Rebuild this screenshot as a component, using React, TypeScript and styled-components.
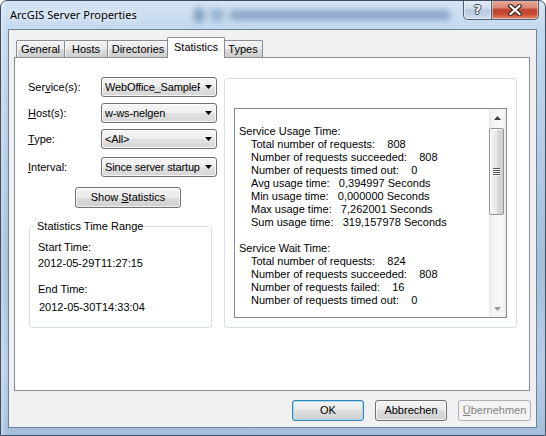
import React from "react";
import styled, { createGlobalStyle } from "styled-components";

const Global = createGlobalStyle`
  html, body {
    margin: 0;
    padding: 0;
    width: 546px;
    height: 436px;
    overflow: hidden;
    background: #fff;
  }
  body {
    font-family: "Liberation Sans", Arial, sans-serif;
    font-size: 11px;
    color: #000;
  }
`;

/* ---------- window frame ---------- */

const Window = styled.div`
  position: relative;
  box-sizing: border-box;
  width: 546px;
  height: 436px;
  display: flex;
  flex-direction: column;
  padding: 0 8px 7px 7px;
  border: 1px solid #3f4d60;
  border-radius: 7px 7px 0 0;
  overflow: hidden;
  background:
    linear-gradient(90deg, rgba(255, 255, 255, 0.35) 0, rgba(255, 255, 255, 0) 6px),
    linear-gradient(180deg, #d4e4f4 0%, #c2d8ee 7%, #b3cbe5 35%, #a4bfdc 60%, #b6cde7 85%, #a5bfdc 100%);
`;

const TitleBar = styled.div`
  position: relative;
  height: 28px;
  display: flex;
  align-items: flex-start;
  justify-content: space-between;
  padding-left: 1px;
`;

/* the blurred desktop content showing through the glass */
const GlassHaze = styled.div`
  position: absolute;
  left: 172px;
  top: 2px;
  width: 270px;
  height: 24px;
  filter: blur(3px);
  opacity: 0.45;
  pointer-events: none;
`;

const HazeBlob = styled.div<{ $x: number; $w: number; $c: string; $y?: number; $h?: number }>`
  position: absolute;
  left: ${(p) => p.$x}px;
  top: ${(p) => p.$y ?? 7}px;
  width: ${(p) => p.$w}px;
  height: ${(p) => p.$h ?? 10}px;
  background: ${(p) => p.$c};
  border-radius: 3px;
`;

const Title = styled.div`
  position: relative;
  font-family: "Noto Sans", "Liberation Sans", sans-serif;
  font-size: 11px;
  line-height: 28px;
  color: #000;
  text-shadow: 0 0 6px rgba(255, 255, 255, 0.95), 0 0 10px rgba(255, 255, 255, 0.8);
  padding-left: 1px;
`;

const CaptionButtons = styled.div`
  position: relative;
  display: flex;
  margin-top: -1px;
  margin-right: -2px;
`;

const CaptionButton = styled.div<{ $variant: "help" | "close" }>`
  box-sizing: border-box;
  height: 20px;
  width: ${(p) => (p.$variant === "close" ? 47 : 29)}px;
  display: flex;
  align-items: center;
  justify-content: center;
  border: 1px solid #4e6076;
  border-top: none;
  border-left-width: ${(p) => (p.$variant === "close" ? 0 : 1)}px;
  border-radius: ${(p) => (p.$variant === "close" ? "0 0 5px 0" : "0 0 0 5px")};
  box-shadow: inset 0 0 0 1px rgba(255, 255, 255, 0.45);
  background: ${(p) =>
    p.$variant === "close"
      ? "linear-gradient(180deg, #eab0a0 0%, #d98574 40%, #c2412b 52%, #c94b32 75%, #e08a70 100%)"
      : "linear-gradient(180deg, #e6eef7 0%, #cfdcea 45%, #b7cadf 52%, #c3d4e8 80%, #d3e1f0 100%)"};
`;

const HelpGlyph = styled.span`
  font-family: "DejaVu Sans", sans-serif;
  font-weight: bold;
  font-size: 13px;
  line-height: 1;
  color: #fff;
  text-shadow: -1px 0 #2d3d52, 1px 0 #2d3d52, 0 -1px #2d3d52, 0 1px #2d3d52;
`;

const CloseGlyph = () => (
  <svg width="14" height="12" viewBox="0 0 14 12">
    <path d="M2.5 2 L11.5 10 M11.5 2 L2.5 10" stroke="#3b2424" strokeWidth="4.4" strokeLinecap="square" />
    <path d="M2.5 2 L11.5 10 M11.5 2 L2.5 10" stroke="#fff" strokeWidth="2.2" strokeLinecap="square" />
  </svg>
);

/* ---------- client area ---------- */

const Client = styled.div`
  flex: 1;
  display: flex;
  flex-direction: column;
  background: #f0f0f0;
  border: 1px solid #6f829a;
  padding: 7px 5px 0 5px;
`;

const TabStrip = styled.div`
  position: relative;
  z-index: 1;
  height: 20px;
  display: flex;
  align-items: flex-end;
  padding-left: 2px;
`;

const Tab = styled.div<{ $w: number; $active?: boolean; $ml?: number }>`
  box-sizing: border-box;
  width: ${(p) => p.$w}px;
  height: ${(p) => (p.$active ? 21 : 17)}px;
  margin-left: ${(p) => p.$ml ?? 0}px;
  margin-bottom: ${(p) => (p.$active ? -1 : 0)}px;
  position: relative;
  z-index: ${(p) => (p.$active ? 2 : 0)};
  display: flex;
  justify-content: center;
  align-items: ${(p) => (p.$active ? "flex-start" : "center")};
  padding-top: ${(p) => (p.$active ? 3 : 0)}px;
  border: 1px solid #898c95;
  border-bottom: none;
  border-radius: 2px 2px 0 0;
  line-height: 13px;
  background: ${(p) =>
    p.$active
      ? "#fff"
      : "linear-gradient(180deg, #f2f2f2 0%, #ebebeb 50%, #dddddd 50%, #cfcfcf 100%)"};
  box-shadow: ${(p) => (p.$active ? "none" : "inset 1px 1px 0 rgba(255,255,255,0.7)")};
`;

const TabPanel = styled.div`
  box-sizing: border-box;
  width: 516px;
  height: 334px;
  background: #fff;
  border: 1px solid #898c95;
  display: flex;
  padding: 19px 0 0 13px;
`;

const LeftColumn = styled.div`
  width: 190px;
  display: flex;
  flex-direction: column;
`;

const FormRow = styled.div<{ $mt: number }>`
  display: flex;
  align-items: center;
  height: 20px;
  margin-top: ${(p) => p.$mt}px;
`;

const Label = styled.div`
  width: 73px;
  line-height: 13px;
`;

const Key = styled.span`
  text-decoration: underline;
  text-underline-offset: 1px;
`;

const Combo = styled.div`
  box-sizing: border-box;
  width: 116px;
  height: 20px;
  display: flex;
  align-items: center;
  border: 1px solid #707070;
  border-radius: 3px;
  background: linear-gradient(180deg, #f6f6f6 0%, #eeeeee 50%, #e2e2e2 50%, #d6d6d6 100%);
  box-shadow: inset 0 0 0 1px rgba(255, 255, 255, 0.75);
`;

/* the closed list shows only as much of the selected value as fits */
const ComboText = styled.span`
  flex: 1;
  overflow: hidden;
  white-space: nowrap;
  padding-left: 3px;
  line-height: 13px;
  letter-spacing: -0.15px;
`;

const ComboArrow = styled.span`
  width: 16px;
  display: flex;
  justify-content: center;
  align-items: center;
`;

const Arrow = ({ up, color = "#000" }: { up?: boolean; color?: string }) => (
  <svg width="7" height="4" viewBox="0 0 7 4">
    <path d={up ? "M0 4 L3.5 0 L7 4 Z" : "M0 0 L7 0 L3.5 4 Z"} fill={color} />
  </svg>
);

const Button = styled.div<{ $kind?: "default" | "disabled"; $w: number }>`
  box-sizing: border-box;
  width: ${(p) => p.$w}px;
  height: 21px;
  display: flex;
  align-items: center;
  justify-content: center;
  line-height: 13px;
  border-radius: 3px;
  border: 1px solid
    ${(p) => (p.$kind === "default" ? "#3c7fb1" : p.$kind === "disabled" ? "#adb2b5" : "#707070")};
  color: ${(p) => (p.$kind === "disabled" ? "#838383" : "#000")};
  background: ${(p) =>
    p.$kind === "disabled"
      ? "#f4f4f4"
      : "linear-gradient(180deg, #f2f2f2 0%, #ebebeb 50%, #dddddd 50%, #cfcfcf 100%)"};
  box-shadow: ${(p) =>
    p.$kind === "default"
      ? "inset 0 0 0 1px #9fdcf6"
      : p.$kind === "disabled"
      ? "none"
      : "inset 0 0 0 1px rgba(255,255,255,0.75)"};
`;

const ShowButton = styled(Button)`
  margin-top: 10px;
  margin-left: 47px;
`;

const TimeGroup = styled.fieldset`
  box-sizing: border-box;
  margin: 12px 0 0 1px;
  width: 183px;
  height: 108px;
  padding: 0 0 0 6px;
  border: 1px solid #d5dfe5;
  border-radius: 3px;
  min-width: 0;
`;

const GroupLegend = styled.legend`
  padding: 0 1px;
  line-height: 13px;
`;

const TimeLine = styled.div<{ $mt: number; $ml?: number }>`
  line-height: 13px;
  margin-top: ${(p) => p.$mt}px;
  margin-left: ${(p) => p.$ml ?? 2}px;
`;

/* ---------- statistics output ---------- */

const OutputGroup = styled.div`
  box-sizing: border-box;
  width: 293px;
  height: 250px;
  margin: 1px 0 0 6px;
  border: 1px solid #d5dfe5;
  border-radius: 3px;
  padding: 29px 0 0 9px;
`;

const ListBox = styled.div`
  box-sizing: border-box;
  width: 273px;
  height: 210px;
  border: 1px solid #828790;
  display: flex;
  background: #fff;
`;

const ListText = styled.div`
  flex: 1;
  overflow: hidden;
  padding: 3px 0 0 4px;
`;

const ListLine = styled.div<{ $indent?: boolean }>`
  height: 13px;
  line-height: 13px;
  white-space: pre;
  padding-left: ${(p) => (p.$indent ? 12 : 0)}px;
`;

const ScrollBar = styled.div`
  width: 17px;
  display: flex;
  flex-direction: column;
  background: linear-gradient(90deg, #e8e8e8 0%, #f4f4f4 20%, #f7f7f7 80%, #ececec 100%);
`;

const ScrollArrow = styled.div`
  height: 17px;
  display: flex;
  align-items: center;
  justify-content: center;
`;

const ScrollThumb = styled.div`
  box-sizing: border-box;
  width: 15px;
  height: 87px;
  margin-top: 2px;
  border: 1px solid #959595;
  border-radius: 2px;
  background: linear-gradient(90deg, #f4f4f4 0%, #e8e8e8 50%, #d9d9d9 51%, #cfcfcf 100%);
  box-shadow: inset 1px 1px 0 rgba(255, 255, 255, 0.8);
  display: flex;
  flex-direction: column;
  align-items: center;
  justify-content: center;
  gap: 1px;
`;

const Grip = styled.div`
  width: 7px;
  height: 1px;
  background: #545454;
  box-shadow: 0 1px 0 #fafafa;
`;

const ScrollSpacer = styled.div`
  flex: 1;
`;

/* ---------- dialog buttons ---------- */

const ButtonRow = styled.div`
  display: flex;
  justify-content: flex-end;
  gap: 11px;
  margin-top: 9px;
`;

const lines: { text: string; indent?: boolean }[] = [
  { text: "" },
  { text: "Service Usage Time:" },
  { text: "Total number of requests:    808", indent: true },
  { text: "Number of requests succeeded:    808", indent: true },
  { text: "Number of requests timed out:    0", indent: true },
  { text: "Avg usage time:   0,394997 Seconds", indent: true },
  { text: "Min usage time:   0,000000 Seconds", indent: true },
  { text: "Max usage time:   7,262001 Seconds", indent: true },
  { text: "Sum usage time:   319,157978 Seconds", indent: true },
  { text: "" },
  { text: "Service Wait Time:" },
  { text: "Total number of requests:    824", indent: true },
  { text: "Number of requests succeeded:    808", indent: true },
  { text: "Number of requests failed:    16", indent: true },
  { text: "Number of requests timed out:    0", indent: true },
];

export default function App() {
  return (
    <>
      <Global />
      <Window>
        <TitleBar>
          <GlassHaze>
            <HazeBlob $x={14} $w={10} $c="#2b4f86" $y={5} $h={14} />
            <HazeBlob $x={30} $w={14} $c="#5a7fb0" $y={6} $h={12} />
            <HazeBlob $x={50} $w={220} $c="#3d5f91" />
          </GlassHaze>
          <Title>ArcGIS Server Properties</Title>
          <CaptionButtons>
            <CaptionButton $variant="help">
              <HelpGlyph>?</HelpGlyph>
            </CaptionButton>
            <CaptionButton $variant="close">
              <CloseGlyph />
            </CaptionButton>
          </CaptionButtons>
        </TitleBar>

        <Client>
          <TabStrip>
            <Tab $w={49}>General</Tab>
            <Tab $w={44} $ml={-1}>Hosts</Tab>
            <Tab $w={62} $ml={-1}>Directories</Tab>
            <Tab $w={58} $ml={-2} $active>
              Statistics
            </Tab>
            <Tab $w={40} $ml={-2}>Types</Tab>
          </TabStrip>

          <TabPanel>
            <LeftColumn>
              <FormRow $mt={0}>
                <Label>
                  Ser<Key>v</Key>ice(s):
                </Label>
                <Combo>
                  <ComboText>WebOffice_SampleProject</ComboText>
                  <ComboArrow>
                    <Arrow />
                  </ComboArrow>
                </Combo>
              </FormRow>
              <FormRow $mt={6}>
                <Label>
                  <Key>H</Key>ost(s):
                </Label>
                <Combo>
                  <ComboText>w-ws-nelgen</ComboText>
                  <ComboArrow>
                    <Arrow />
                  </ComboArrow>
                </Combo>
              </FormRow>
              <FormRow $mt={6}>
                <Label>
                  <Key>T</Key>ype:
                </Label>
                <Combo>
                  <ComboText>&lt;All&gt;</ComboText>
                  <ComboArrow>
                    <Arrow />
                  </ComboArrow>
                </Combo>
              </FormRow>
              <FormRow $mt={8}>
                <Label>
                  <Key>I</Key>nterval:
                </Label>
                <Combo>
                  <ComboText>Since server startup</ComboText>
                  <ComboArrow>
                    <Arrow />
                  </ComboArrow>
                </Combo>
              </FormRow>

              <ShowButton $w={106}>
                Show&nbsp;<Key>S</Key>tatistics
              </ShowButton>

              <TimeGroup>
                <GroupLegend>Statistics Time Range</GroupLegend>
                <TimeLine $mt={8}>Start Time:</TimeLine>
                <TimeLine $mt={3}>2012-05-29T11:27:15</TimeLine>
                <TimeLine $mt={13}>End Time:</TimeLine>
                <TimeLine $mt={5} $ml={3}>
                  2012-05-30T14:33:04
                </TimeLine>
              </TimeGroup>
            </LeftColumn>

            <OutputGroup>
              <ListBox>
                <ListText>
                  {lines.map((l, i) => (
                    <ListLine key={i} $indent={l.indent}>
                      {l.text}
                    </ListLine>
                  ))}
                </ListText>
                <ScrollBar>
                  <ScrollArrow>
                    <Arrow up color="#404040" />
                  </ScrollArrow>
                  <ScrollThumb>
                    <Grip />
                    <Grip />
                    <Grip />
                    <Grip />
                  </ScrollThumb>
                  <ScrollSpacer />
                  <ScrollArrow>
                    <Arrow color="#9a9a9a" />
                  </ScrollArrow>
                </ScrollBar>
              </ListBox>
            </OutputGroup>
          </TabPanel>

          <ButtonRow>
            <Button $w={72} $kind="default">
              OK
            </Button>
            <Button $w={72}>Abbrechen</Button>
            <Button $w={73} $kind="disabled">
              <Key>Ü</Key>bernehmen
            </Button>
          </ButtonRow>
        </Client>
      </Window>
    </>
  );
}
